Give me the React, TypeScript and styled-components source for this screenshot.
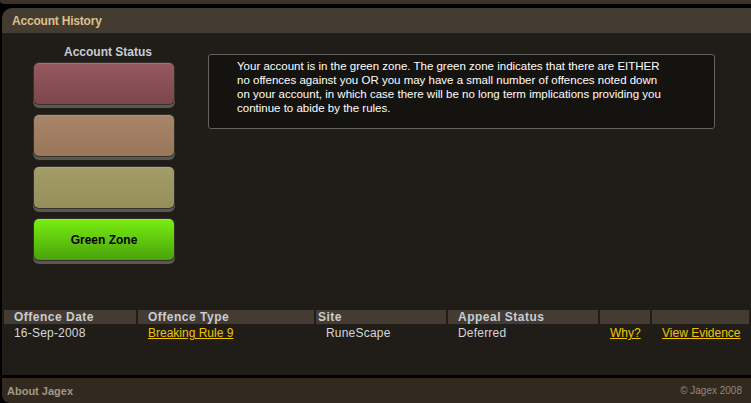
import React from 'react'
import styled, { createGlobalStyle } from 'styled-components'

const GlobalStyle = createGlobalStyle`
  html, body {
    margin: 0;
    padding: 0;
    background: #000;
    overflow: hidden;
  }
  body {
    font-family: "Liberation Sans", Arial, sans-serif;
  }
`

const Page = styled.div`
  width: 751px;
  height: 403px;
  padding-left: 2px;
  box-sizing: border-box;
  display: flex;
  flex-direction: column;
`

const TopStrip = styled.div`
  height: 4px;
  background: #3a3228;
  border-bottom-left-radius: 8px;
  margin-left: -2px;
  margin-bottom: 4px;
`

const PanelHeader = styled.div`
  height: 25px;
  background: #443c31;
  border-top-left-radius: 10px;
  display: flex;
  align-items: center;
  padding-left: 10px;
  color: #dcc08c;
  font-size: 12px;
  font-weight: bold;
  letter-spacing: -0.2px;
`

const PanelBody = styled.div`
  height: 342px;
  background: #201d19;
  box-sizing: border-box;
  padding-top: 12px;
`

const TopRow = styled.div`
  display: flex;
  align-items: flex-start;
`

const StatusColumn = styled.div`
  width: 140px;
  margin-left: 32px;
  display: flex;
  flex-direction: column;
  gap: 11px;
`

const StatusTitle = styled.div`
  color: #c6ccd6;
  font-size: 12px;
  font-weight: bold;
  line-height: 14px;
  text-align: center;
  padding-left: 8px;
  margin-bottom: -7px;
`

const zoneColours = {
  red: ['#97595f', '#7b464b'],
  amber: ['#a88568', '#9a775b'],
  olive: ['#a59d68', '#968e5b'],
  green: ['#78ee12', '#4aa20b'],
}

const ZoneButton = styled.div<{ $zone: keyof typeof zoneColours }>`
  height: 41px;
  border-radius: 5px;
  background: linear-gradient(
    to bottom,
    ${(p) => zoneColours[p.$zone][0]},
    ${(p) => zoneColours[p.$zone][1]}
  );
  box-shadow: inset 0 1px 0 rgba(255, 255, 255, 0.12), 0 0 0 1px #34302b,
    0 3px 0 1px #5b5854;
  display: flex;
  align-items: center;
  justify-content: center;
  color: #000;
  font-size: 12px;
  font-weight: bold;
`

const InfoBox = styled.div`
  margin-top: 9px;
  margin-left: 34px;
  width: 507px;
  box-sizing: border-box;
  border: 1px solid #626262;
  border-radius: 3px;
  background: #151310;
  padding: 4px 42px 13px 28px;
  color: #fff;
  font-size: 11.5px;
  line-height: 14px;
`

const OffenceTable = styled.table`
  width: 749px;
  margin-top: 48px;
  border-spacing: 2px;
  table-layout: fixed;
`

const HeadCell = styled.th<{ $tight?: boolean }>`
  background: #443c32;
  color: #c9ccd2;
  font-size: 12px;
  font-weight: bold;
  letter-spacing: 0.5px;
  text-align: left;
  height: 14px;
  line-height: 14px;
  padding: 0 0 0 ${(p) => (p.$tight ? 2 : 10)}px;
`

const Cell = styled.td`
  color: #d6d6d6;
  font-size: 12px;
  letter-spacing: 0.2px;
  line-height: 14px;
  padding: 0 0 0 10px;
`

const Link = styled.a`
  color: #f2c400;
  text-decoration: underline;
  letter-spacing: 0;
  cursor: pointer;
`

const Footer = styled.div`
  margin-top: 3px;
  flex: 1;
  background: #32291f;
  border-bottom-left-radius: 8px;
  display: flex;
  align-items: center;
  justify-content: space-between;
  padding: 0 9px 0 5px;
`

const FooterLink = styled.span`
  color: #a39886;
  font-size: 11px;
  font-weight: bold;
`

const Copyright = styled.span`
  color: #938a79;
  font-size: 10px;
`

const App = () => {
  return (
    <>
      <GlobalStyle />
      <Page>
        <TopStrip />
        <PanelHeader>Account History</PanelHeader>
        <PanelBody>
          <TopRow>
            <StatusColumn>
              <StatusTitle>Account Status</StatusTitle>
              <ZoneButton $zone="red" />
              <ZoneButton $zone="amber" />
              <ZoneButton $zone="olive" />
              <ZoneButton $zone="green">Green Zone</ZoneButton>
            </StatusColumn>
            <InfoBox>
              Your account is in the green zone. The green zone indicates that there are EITHER
              no offences against you OR you may have a small number of offences noted down
              on your account, in which case there will be no long term implications providing you
              continue to abide by the rules.
            </InfoBox>
          </TopRow>
          <OffenceTable>
            <colgroup>
              <col style={{ width: 132 }} />
              <col style={{ width: 176 }} />
              <col style={{ width: 130 }} />
              <col style={{ width: 150 }} />
              <col style={{ width: 50 }} />
              <col />
            </colgroup>
            <thead>
              <tr>
                <HeadCell>Offence Date</HeadCell>
                <HeadCell>Offence Type</HeadCell>
                <HeadCell $tight>Site</HeadCell>
                <HeadCell>Appeal Status</HeadCell>
                <HeadCell />
                <HeadCell />
              </tr>
            </thead>
            <tbody>
              <tr>
                <Cell>16-Sep-2008</Cell>
                <Cell><Link>Breaking Rule 9</Link></Cell>
                <Cell>RuneScape</Cell>
                <Cell>Deferred</Cell>
                <Cell><Link>Why?</Link></Cell>
                <Cell><Link>View Evidence</Link></Cell>
              </tr>
            </tbody>
          </OffenceTable>
        </PanelBody>
        <Footer>
          <FooterLink>About Jagex</FooterLink>
          <Copyright>© Jagex 2008</Copyright>
        </Footer>
      </Page>
    </>
  )
}

export default App
